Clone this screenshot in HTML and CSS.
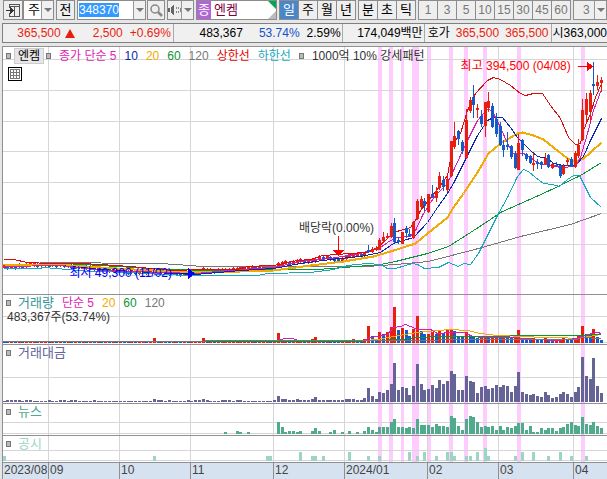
FILE: index.html
```html
<!DOCTYPE html>
<html lang="ko">

<head>
    <meta charset="UTF-8">
    <meta name="viewport" content="width=device-width, initial-scale=1.0">
    <title>엔켐 일봉 차트</title>
    <link rel="stylesheet" href="styles.css">
</head>

<body>
    <div class="toolbar">
        <button class="btn btn-icon" aria-label="패널">
            <svg width="14" height="13" viewBox="0 0 14 13" shape-rendering="crispEdges">
                <path d="M3.5 4V.5H13.5V12.5H3.5V9M3 2.5H14M8.5 3V12" fill="none" stroke="#555" />
                <path d="M0 6H4V3L8 6.500L4 10V7H0Z" fill="#333" />
            </svg>
        </button>
        <div class="picker">
            <select class="pick-market" aria-label="종목 구분">
                <option>주</option>
            </select>
            <span class="arrow"></span>
        </div>
        <button class="btn btn-prev">전</button>
        <div class="code-box">
            <input type="text" id="code" value="348370" aria-label="종목코드">
            <button class="arrow-btn" aria-label="최근 종목"><span class="arrow"></span></button>
        </div>
        <button class="btn btn-search" aria-label="검색">
            <svg width="13" height="13" viewBox="0 0 13 13">
                <circle cx="5" cy="5" r="4" fill="#eee" stroke="#888" stroke-width="1.500" />
                <path d="M8 8L12 12" stroke="#888" stroke-width="2.500" />
            </svg>
        </button>
        <div class="sound-box">
            <button class="btn btn-sound" aria-label="소리">
                <svg width="13" height="12" viewBox="0 0 13 12" shape-rendering="crispEdges">
                    <path d="M0 4H2V8H0ZM3 4L6 0V12L3 8Z" fill="#666" />
                    <path d="M8 3V5M8 7V9M10 3V5M10 7V9M12 4V8" stroke="#888" />
                </svg>
            </button>
            <button class="arrow-btn" aria-label="소리 설정"><span class="arrow"></span></button>
        </div>
        <div class="stock-name">
            <span class="tag">종</span>
            <span>엔켐</span>
        </div>
        <div class="periods">
            <button class="btn active">일</button>
            <button class="btn">주</button>
            <button class="btn">월</button>
            <button class="btn">년</button>
        </div>
        <div class="periods">
            <button class="btn">분</button>
            <button class="btn">초</button>
            <button class="btn">틱</button>
        </div>
        <div class="periods minutes">
            <button class="btn">1</button>
            <button class="btn">3</button>
            <button class="btn">5</button>
            <button class="btn">10</button>
            <button class="btn">15</button>
            <button class="btn">30</button>
            <button class="btn">45</button>
            <button class="btn">60</button>
        </div>
        <div class="picker picker-minute">
            <select aria-label="분 단위">
                <option>3</option>
            </select>
            <span class="arrow"></span>
        </div>
    </div>

    <div class="quote">
        <div class="cell cell-price up">
            <span>365,500</span><span class="up-mark"></span><span class="diff">2,500</span><span>+0.69%</span>
        </div>
        <div class="cell cell-volume">
            <span>483,367</span><span class="rate">53.74%</span><span>2.59%</span>
        </div>
        <div class="cell cell-amount">174,049백만</div>
        <div class="cell cell-bid">호가<span class="up">365,500</span><span class="up">365,500</span></div>
        <div class="cell cell-open">시<span>363,000</span></div>
    </div>

    <div class="chart">
        <div class="panel panel-price">
            <svg class="plot" id="price" viewBox="3 47 604 247" preserveAspectRatio="none"></svg>
            <div class="legend">
                <i class="box"></i><button class="name-btn">엔켐</button><i class="box"></i>
                <span class="ma ma5">종가 단순 5</span>
                <span class="ma ma10">10</span>
                <span class="ma ma20">20</span>
                <span class="ma ma60">60</span>
                <span class="ma ma120">120</span>
                <span class="ma upper">상한선</span>
                <span class="ma lower">하한선</span>
                <i class="box"></i>
                <span class="pattern">1000억 10% 강세패턴</span>
            </div>
            <button class="grid-btn" aria-label="표 보기">
                <svg width="10" height="10" viewBox="0 0 10 10" shape-rendering="crispEdges">
                    <path d="M.5.5H9.5V9.500H.5ZM0 3.500H10M0 6.500H10M3.500 0V10M6.500 0V10" fill="none" stroke="#777" />
                </svg>
            </button>
            <span class="note note-high">최고 394,500 (04/08)</span>
            <span class="note note-low">최저 49,300 (11/02)</span>
            <span class="note note-div">배당락(0.00%)</span>
        </div>
        <div class="panel panel-volume">
            <svg class="plot" id="volume" viewBox="3 295 604 49" preserveAspectRatio="none"></svg>
            <div class="legend">
                <i class="box"></i>
                <span class="title title-volume">거래량</span>
                <span class="ma ma5">단순 5</span>
                <span class="ma ma20">20</span>
                <span class="ma ma60">60</span>
                <span class="ma ma120">120</span>
            </div>
            <div class="volume-now">483,367주(53.74%)</div>
        </div>
        <div class="panel panel-amount">
            <svg class="plot" id="amount" viewBox="3 345 604 58" preserveAspectRatio="none"></svg>
            <div class="legend"><i class="box"></i><span class="title title-amount">거래대금</span></div>
        </div>
        <div class="panel panel-news">
            <svg class="plot" id="news" viewBox="3 404 604 31" preserveAspectRatio="none"></svg>
            <div class="legend"><i class="box"></i><span class="title title-news">뉴스</span></div>
        </div>
        <div class="panel panel-notice">
            <svg class="plot" id="notice" viewBox="3 436 604 26" preserveAspectRatio="none"></svg>
            <div class="legend"><i class="box"></i><span class="title title-notice">공시</span></div>
        </div>
        <div class="axis">
            <span>2023/08</span><span>09</span><span>10</span><span>11</span><span>12</span>
            <span>2024/01</span><span>02</span><span>03</span><span>04</span>
        </div>
    </div>

    <script src="chart.js"></script>
</body>

</html>
```

FILE: styles.css
```css
* {
    box-sizing: border-box;
}

body {
    margin: 0;
    background-color: #e6e6e6;
    color: #000;
    font-family: "Liberation Sans", "Noto Sans CJK KR", sans-serif;
    font-size: 12px;
    line-height: 14px;
    overflow: hidden;
}

button,
input,
select {
    margin: 0;
    padding: 0;
    border: 1px solid #8c8c8c;
    border-radius: 0;
    background-color: #eee;
    color: #000;
    font: inherit;
    appearance: none;
}

/* toolbar */
.toolbar {
    display: flex;
    gap: 2px;
    height: 23px;
    padding: 0 0 3px 3px;
    white-space: nowrap;
}

.toolbar > * {
    flex: none;
}

.btn {
    display: flex;
    align-items: center;
    justify-content: center;
    width: 20px;
}

.btn-icon {
    margin-right: -2px;
}

.picker {
    position: relative;
    width: 31px;
}

.picker select {
    width: 100%;
    height: 100%;
    padding-left: 4px;
    background-color: #fff;
    font-size: 13px;
}

.picker .arrow {
    position: absolute;
    top: 1px;
    right: 1px;
    bottom: 1px;
    pointer-events: none;
}

.arrow {
    display: flex;
    align-items: center;
    justify-content: center;
    width: 12px;
    border-left: 1px solid #999;
    background-color: #f0f0f0;
}

.arrow::after {
    content: "";
    border: 4px solid transparent;
    border-top: 4px solid #777;
    border-bottom: 0;
}

.btn-prev {
    width: 19px;
    font-size: 13px;
}

.code-box {
    display: flex;
    width: 69px;
    border: 1px solid #8c8c8c;
}

.code-box input {
    flex: 1;
    min-width: 0;
    padding-left: 1px;
    border: 0;
    outline: 0;
    background-color: #fff;
}

.code-box input::selection {
    background-color: #3399ff;
    color: #fff;
}

.arrow-btn {
    display: flex;
    border: 0;
}

.btn-search {
    width: 18px;
    margin-left: -1px;
}

.sound-box {
    display: flex;
    width: 27px;
    border: 1px solid #8c8c8c;
}

.btn-sound {
    flex: 1;
    border: 0;
}

.stock-name {
    position: relative;
    display: flex;
    align-items: center;
    gap: 3px;
    width: 81px;
    border: 1px solid #8c8c8c;
    background-color: #fff;
    color: #800040;
    font-size: 13px;
}

.stock-name::before,
.stock-name::after {
    content: "";
    position: absolute;
    right: 0;
    border: 4px solid transparent;
}

.stock-name::before {
    top: 0;
    border-top-color: #00a651;
    border-right-color: #00a651;
}

.stock-name::after {
    bottom: 0;
    border-right-color: #bbb;
    border-bottom-color: #bbb;
}

.tag {
    padding: 2px 1px;
    background-color: #b265d6;
    color: #fff;
}

.periods {
    display: flex;
    padding-right: 1px;
}

.periods .btn {
    margin-right: -1px;
    font-size: 13px;
}

.periods .active {
    background-color: #4a86c8;
    color: #fff;
}

.minutes .btn,
.picker-minute select {
    color: #777;
    font-size: 12px;
}

.toolbar .picker-minute {
    flex: 1;
}

.picker-minute select {
    padding-left: 9px;
    background-color: #eee;
}

/* quote line */
.quote {
    display: flex;
    height: 20px;
    margin-left: 2px;
    border: 1px solid #808080;
    border-right: 0;
    background-color: #f0f0f0;
    white-space: nowrap;
}

.cell {
    display: flex;
    align-items: center;
    justify-content: flex-end;
    border-right: 1px solid #aaa;
}

.cell-price {
    flex: 172;
    padding-right: 2px;
    gap: 7px;
}

.cell-volume {
    flex: 171;
    padding-right: 1px;
    gap: 7px;
}

.cell-amount {
    flex: 82;
    padding-right: 1px;
}

.cell-bid {
    flex: 126;
    justify-content: flex-start;
    padding-left: 3px;
    gap: 6px;
}

.cell-open {
    flex: 53;
    justify-content: flex-start;
    padding-left: 1px;
    border-right: 0;
}

.up {
    color: #e81e0e;
}

.up-mark {
    margin-left: -3px;
    border: 5px solid transparent;
    border-top: 0;
    border-bottom: 9px solid #e81e0e;
}

.diff {
    margin-left: 11px;
}

.rate {
    margin-left: 9px;
    color: #1450c8;
}

/* chart */
.chart {
    margin: 3px 0 0 2px;
    border-top: 1px solid #909090;
    border-left: 1px solid #909090;
    background-color: #fff;
}

.panel {
    position: relative;
    border-bottom: 1px solid #909090;
}

.panel-price {
    height: 248px;
}

.panel-volume {
    height: 50px;
}

.panel-amount {
    height: 59px;
}

.panel-news {
    height: 32px;
}

.panel-notice {
    height: 27px;
}

.plot {
    position: absolute;
    width: 100%;
    height: 100%;
}

.legend {
    position: relative;
    display: flex;
    align-items: center;
    gap: 8px;
    padding: 1px 0 0 3px;
    white-space: nowrap;
}

.box {
    width: 5px;
    height: 6px;
    border: 1px solid #777;
    background-color: #bbb;
}

.name-btn {
    width: 30px;
    margin: 0 -6px 0 -5px;
    border-color: #ccc;
    background-color: #e6e6e6;
}

.title {
    margin-left: -1px;
    font-size: 13px;
}

.ma5 {
    color: #e01eb4;
}

.ma10 {
    color: #0a28b4;
}

.ma20 {
    color: #f0aa00;
}

.ma60 {
    color: #0a9632;
}

.ma120 {
    color: #777;
}

.upper {
    color: #e60000;
}

.lower {
    color: #14aabe;
}

.pattern,
.volume-now {
    color: #333;
}

.volume-now {
    position: relative;
    padding-left: 4px;
}

.title-volume {
    color: #329696;
}

.title-amount {
    color: #646496;
}

.title-news {
    color: #50aa8c;
}

.title-notice {
    color: #9cd6c3;
}

.grid-btn {
    position: relative;
    display: flex;
    align-items: center;
    justify-content: center;
    width: 14px;
    height: 14px;
    margin: 3px 0 0 5px;
    border-color: #000;
    background-color: #fff;
}

.note {
    position: absolute;
    white-space: nowrap;
}

.note-high {
    top: 12px;
    right: 6%;
    color: #f00;
}

.note-low {
    top: 219px;
    left: 11%;
    color: #00f;
}

.note-div {
    top: 174px;
    left: 49%;
    color: #333;
}

.axis {
    display: grid;
    grid-template-columns: 45fr 71fr 71fr 83fr 71fr 83fr 71fr 75fr 34fr;
    height: 17px;
    background-color: #d7e2f0;
    color: #444;
}

.axis span {
    padding-left: 1px;
    border-left: 1px solid #909090;
    white-space: nowrap;
}

.axis span:first-child {
    border-left: 0;
}
```

FILE: chart.js
```js
const SVG_NS = 'http://www.w3.org/2000/svg';
const DAYS = 160;
const STEP = 3.757;

const RED = '#e81e0e';
const BLUE = '#145ac8';

const months = [48, 119, 190, 273, 344, 427, 498, 573];
// days matching the bullish pattern: [x, width]
const signals = [[378, 4], [389, 4], [401, 3], [412, 7], [428, 3], [449, 4], [464, 4], [483, 4], [517, 4], [581, 4]];

// flat part of the year, close only
const closes = [
    266, 267, 266, 267, 265, 266, 265, 264, 264, 265, 264, 264, 265, 264, 265, 264, 265, 265, 266, 265,
    266, 266, 267, 267, 268, 268, 269, 269, 270, 270, 271, 270, 271, 272, 271, 272, 272, 271, 272, 271,
    271, 272, 271, 272, 273, 272, 273, 274, 273, 274, 274, 273, 271, 269, 270, 270, 271, 270, 270, 270,
    270, 269, 269, 268, 268, 268, 267, 268, 267, 267, 267, 268, 267, 264, 263, 262, 263, 262, 261, 260,
    261, 261, 260, 260, 257, 258, 257, 258, 259, 260, 259, 257, 255, 255, 254, 255, 254
];

// [direction, body top, body bottom, high, low]
const candles = [
    ['b', 250, 252, 245, 253], ['r', 249, 252, 247, 253], ['r', 248, 250, 246, 251],
    ['r', 240, 250, 238, 250], ['r', 237, 241, 232, 242], ['r', 236, 238, 233, 239],
    ['r', 226, 237, 223, 238], ['b', 223, 242, 218, 243], ['b', 240, 242, 237, 244],
    ['r', 232, 244, 232, 244], ['b', 228, 233, 226, 238], ['b', 234, 236, 229, 237],
    ['r', 222, 238, 221, 239], ['r', 201, 219, 199, 220], ['r', 199, 207, 196, 208],
    ['b', 201, 206, 198, 211], ['r', 194, 212, 194, 213], ['b', 194, 197, 185, 198],
    ['r', 191, 198, 187, 202], ['r', 176, 188, 172, 190], ['b', 180, 187, 176, 191],
    ['r', 179, 190, 175, 192], ['r', 141, 176, 141, 177], ['r', 136, 147, 122, 149],
    ['b', 131, 139, 130, 145], ['b', 142, 151, 140, 154], ['r', 120, 158, 109, 159],
    ['r', 100, 111, 97, 113], ['b', 97, 105, 85, 118], ['r', 108, 110, 104, 118],
    ['b', 116, 124, 110, 127], ['r', 102, 126, 102, 137], ['r', 101, 108, 92, 112],
    ['b', 106, 127, 103, 128], ['b', 119, 134, 113, 137], ['b', 126, 145, 122, 146],
    ['b', 145, 150, 140, 157], ['b', 145, 147, 132, 150], ['b', 146, 157, 145, 159],
    ['b', 154, 168, 151, 169], ['r', 143, 170, 134, 170], ['b', 140, 150, 139, 156],
    ['b', 154, 159, 153, 161], ['b', 156, 163, 155, 164], ['r', 163, 165, 153, 171],
    ['b', 162, 164, 159, 169], ['b', 162, 165, 161, 169], ['r', 158, 164, 153, 165],
    ['b', 155, 167, 154, 168], ['r', 164, 168, 163, 169], ['b', 165, 166, 162, 167],
    ['b', 165, 176, 165, 178], ['r', 166, 174, 164, 175], ['r', 160, 162, 158, 166],
    ['b', 159, 167, 157, 167], ['r', 153, 167, 151, 168], ['r', 145, 156, 139, 158],
    ['r', 110, 140, 99, 141], ['r', 99, 115, 93, 122], ['r', 93, 112, 90, 123],
    ['b', 84, 86, 62, 95], ['r', 82, 86, 75, 90], ['r', 80, 83, 77, 92]
];

const priceLines = [
    ['#777777', 1, '40,262 160,263 190,265 200,266 367,266 380,265 395,264 428,261 478,248 520,236 570,224 601,213'],
    ['#0a9632', 1, '63,263 100,265 150,268 200,270 317,269 343,267 380,264 395,261 427,253 448,246 470,232 490,219 500,212 547,191 580,175 601,162'],
    ['#14aabe', 1, '3,268 38,268 44,267 67,269 90,271 133,272 160,274 190,275 257,275 267,273 310,272 333,269 347,265 367,263 380,264 387,268 395,268 412,263 417,264 424,268 438,267 448,262 458,266 463,263 470,264 478,253 485,239 498,213 507,197 517,176 523,169 528,171 535,177 543,183 552,184 559,186 567,179 573,175 579,175 583,183 590,197 601,207'],
    ['#f0aa00', 2, '3,264 70,265 100,267 133,269 190,272 240,271 273,270 310,265 343,261 373,256 390,251 415,243 427,233 447,217 453,207 463,193 477,172 488,153 500,143 517,133 522,132 533,135 543,139 553,147 567,158 575,161 583,158 590,152 601,142'],
    ['#0a28aa', 1, '3,266 60,265 100,269 133,271 195,274 240,270 273,268 300,263 330,259 360,256 380,252 393,243 413,237 427,222 437,207 447,193 453,183 463,163 477,135 487,120 493,117 502,117 510,127 517,137 530,150 537,156 547,158 553,163 563,165 575,165 583,156 590,140 601,118'],
    ['#d71eb4', 1, '3,266 60,265 100,270 195,273 240,269 273,267 300,261 330,258 360,253 380,247 390,240 397,237 410,236 415,230 422,215 428,205 435,195 447,183 453,170 460,155 467,140 477,120 485,111 488,108 493,113 500,127 507,143 513,153 523,153 530,157 538,163 552,165 560,167 575,166 580,157 587,133 593,110 601,89'],
    ['#dc0a0a', 1, '3,259 13,259 27,262 50,263 80,263 100,264 130,266 150,268 173,270 200,269 237,269 247,266 273,265 297,260 310,259 322,255 338,254 348,253 367,252 377,247 387,238 393,232 410,227 415,220 420,210 428,200 440,185 447,175 453,143 460,133 467,110 475,93 487,80 493,77 500,79 510,85 520,93 525,95 533,93 542,93 550,105 560,118 568,137 575,144 580,143 583,130 590,113 595,97 601,83']
];

const volumeLines = [
    ['#f0aa00', 1, '3,341 350,341 377,339 393,336 417,332 437,330 450,329 467,330 480,333 497,335 527,336 540,337 557,337 577,338 583,337 601,334'],
    ['#d71eb4', 1, '3,341 270,341 285,338 292,338 300,341 350,341 363,340 370,337 377,336 387,334 393,327 400,326 405,324 410,326 417,329 430,329 437,333 450,332 463,332 473,336 483,337 513,337 537,339 557,340 577,338 583,335 597,332 601,333'],
    ['#0a9632', 1, '3,341 350,341 400,339 417,337 443,336 580,335 601,334'],
    ['#777777', 1, '3,341 417,340 460,339 577,339 580,337 601,338']
];

// volume since 2023/12/29, colour letter and height
const volumes = ('r4 b3 b3 r4 r17 b7 b3 r11 b9 r11 r16 r36 b13 r15 b13 b7 r14 r27 b12 b9 r9 r11 b9 r12 b10 r13 r14 ' +
    'b12 b6 b6 r11 b8 b7 b5 r7 r7 b6 r6 r7 b6 r7 b6 b5 r6 r13 b5 b4 b4 r5 b4 b3 r5 b4 b3 r3 r4 r5 b4 b3 r4 r7 ' +
    'r17 b9 b8 r14 b6 b3').split(' ');
const volumePeaks = { 40: 5, 53: 5, 73: 10, 82: 4, 83: 6 };

const amounts = [
    1, 2, 2, 2, 2, 1, 2, 2, 1, 1, 1, 1, 2, 1, 1, 2, 2, 1, 2, 2, 1, 1, 1, 1, 2, 1, 1, 1, 1, 1, 1, 1, 1, 1, 1, 1,
    1, 1, 1, 1, 3, 2, 2, 1, 2, 1, 1, 1, 1, 2, 1, 2, 2, 3, 2, 1, 1, 1, 2, 2, 2, 1, 2, 2, 1, 1, 1, 1, 1, 1, 1, 1,
    2, 6, 3, 3, 2, 2, 3, 2, 2, 2, 3, 5, 2, 2, 2, 2, 2, 2, 2, 3, 3,
    3, 2, 2, 4, 14, 6, 3, 10, 9, 12, 18, 39, 12, 15, 14, 7, 16, 38, 18, 12, 13, 17, 14, 22, 18, 21, 31, 28, 12,
    12, 26, 21, 20, 9, 15, 16, 13, 14, 17, 15, 17, 16, 10, 16, 30, 10, 8, 7, 8, 6, 5, 10, 7, 4, 5, 8, 10, 8, 5,
    10, 15, 45, 26, 23, 44, 16, 9
];

const newsEarly = {
    59: 2, 62: 3, 63: 2, 65: 2, 73: 12, 74: 7, 75: 2, 76: 3, 77: 3, 78: 2, 79: 3, 82: 3, 83: 6, 84: 3,
    87: 2, 88: 4, 90: 2, 92: 3, 94: 2, 96: 3
};
const newsLate = [
    7, 4, 2, 7, 7, 7, 12, 15, 7, 7, 6, 7, 6, 15, 9, 9, 9, 7, 10, 8, 8, 7, 18, 16, 8, 4, 15, 18, 17, 12, 7, 8, 7, 8,
    4, 8, 4, 7, 6, 8, 11, 11, 4, 8, 2, 2, 6, 4, 6, 6, 3, 6, 7, 10, 12, 9, 8, 17, 10, 9, 12, 8, 6
];

const notices = {
    0: 5, 40: 5, 70: 5, 71: 5, 79: 9, 82: 5, 83: 5, 85: 5, 92: 9, 97: 5, 100: 5, 108: 9, 110: 5, 112: 9, 115: 5,
    118: 9, 119: 9, 120: 5, 123: 5, 124: 5, 126: 9, 128: 13, 129: 5, 136: 5, 138: 9, 141: 9, 145: 5, 148: 9,
    151: 5, 155: 5
};

function add(svg, tag, attrs) {
    const el = document.createElementNS(SVG_NS, tag);
    for (const key in attrs) {
        el.setAttribute(key, attrs[key]);
    }
    svg.appendChild(el);
}

function rect(svg, x, y, width, height, fill) {
    add(svg, 'rect', { x, y, width, height, fill });
}

// left edge of the bar of day i
function dayX(i) {
    return Math.round(600 - (DAYS - 1 - i) * STEP);
}

function bar(svg, i, base, height, fill) {
    rect(svg, dayX(i), base - height, 3, height, fill);
}

function drawBackground(svg, rows) {
    const box = svg.viewBox.baseVal;
    svg.setAttribute('shape-rendering', 'crispEdges');
    signals.forEach(([x, w]) => rect(svg, x, box.y, w, box.height, '#ffccff'));
    rows.forEach(y => rect(svg, box.x, y, box.width, 1, '#d6d6d6'));
    months.forEach(x => rect(svg, x, box.y, 1, box.height, '#d6d6d6'));
}

function drawLines(svg, lines) {
    lines.forEach(([stroke, width, points]) => {
        add(svg, 'polyline', { points, fill: 'none', stroke, 'stroke-width': width, transform: 'translate(.5 .5)' });
    });
}

function drawPrice() {
    const svg = document.getElementById('price');
    drawBackground(svg, [59, 90, 121, 151, 182, 213, 244, 275]);
    closes.forEach((y, i) => {
        const color = i > 0 && y > closes[i - 1] ? BLUE : RED;
        rect(svg, dayX(i) + 1, y - 2, 1, 5, color);
        rect(svg, dayX(i), y - 1, 3, 3, color);
    });
    drawLines(svg, priceLines);
    candles.forEach(([dir, top, bottom, high, low], n) => {
        const x = dayX(closes.length + n);
        const color = dir === 'r' ? RED : BLUE;
        rect(svg, x + 1, high, 1, low - high, color);
        rect(svg, x, top, 3, bottom - top, color);
    });
    // arrows of the high, low and ex-dividend notes
    add(svg, 'path', { d: 'M578 66H587V62L594 66.5L587 71V67H578Z', fill: '#f00' });
    add(svg, 'path', { d: 'M180 273H188V268L195 273.5L188 279V274H180Z', fill: '#00f' });
    add(svg, 'path', { d: 'M338 236H339V250H344L338.5 256L333 250H338Z', fill: '#f00' });
}

function drawVolume() {
    const svg = document.getElementById('volume');
    drawBackground(svg, [316, 342]);
    const first = DAYS - volumes.length;
    for (let i = 0; i < first; i++) {
        const color = volumePeaks[i] || closes[i] <= closes[i - 1] ? RED : BLUE;
        bar(svg, i, 343, volumePeaks[i] || 2, color);
    }
    volumes.forEach((v, n) => {
        bar(svg, first + n, 343, Number(v.slice(1)), v[0] === 'r' ? RED : BLUE);
    });
    drawLines(svg, volumeLines);
}

function drawBars(id, rows, values, base, color) {
    const svg = document.getElementById(id);
    drawBackground(svg, rows);
    for (const i in values) {
        bar(svg, Number(i), base, values[i], color);
    }
}

const news = { ...newsEarly };
newsLate.forEach((v, n) => news[DAYS - newsLate.length + n] = v);

drawPrice();
drawVolume();
drawBars('amount', [377], amounts, 402, '#646496');
drawBars('news', [422, 433], news, 434, '#50aa8c');
drawBars('notice', [450, 460], notices, 461, '#9cd6c3');

// the code is ready to be typed over
document.getElementById('code').select();
```
